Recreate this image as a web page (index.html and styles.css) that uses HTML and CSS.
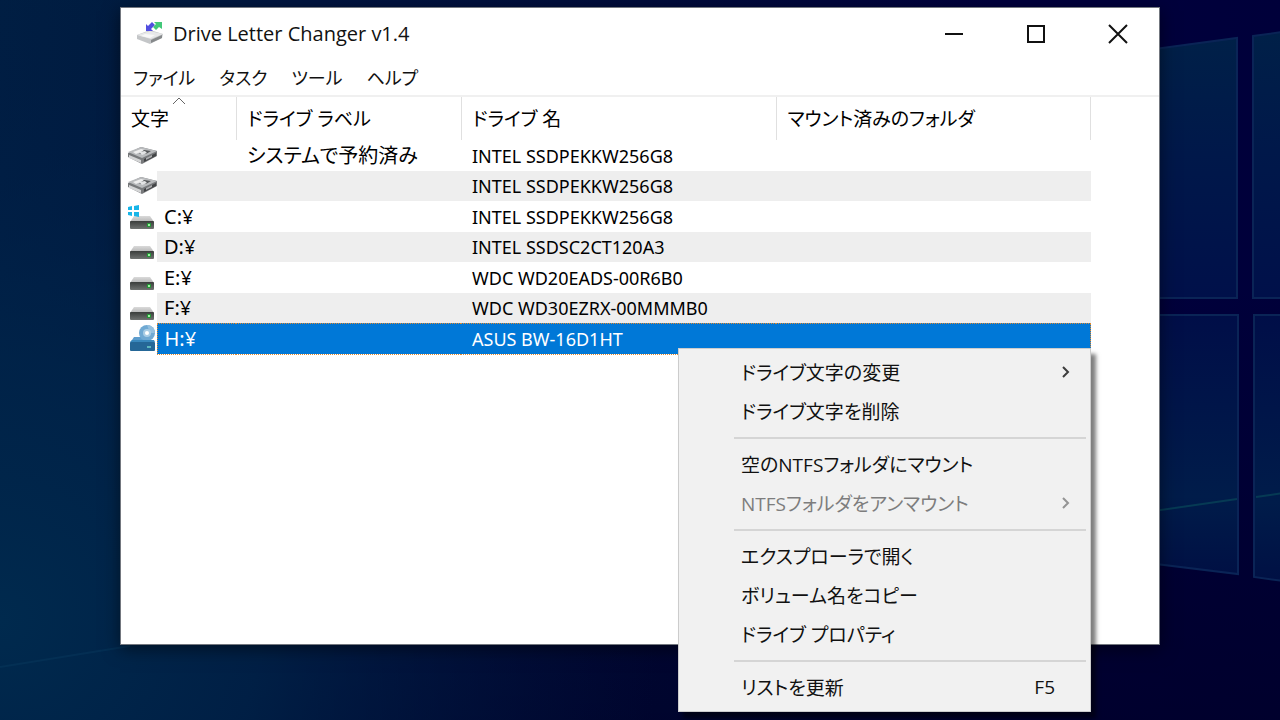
FILE: index.html
```html
<!DOCTYPE html>
<html lang="ja">
<head>
<meta charset="utf-8">
<title>Drive Letter Changer v1.4</title>
<link rel="stylesheet" href="styles.css">
</head>
<body>
<div class="desktop">
  <svg class="wallpaper" viewBox="0 0 1280 720" preserveAspectRatio="none" aria-hidden="true">
    <defs>
      <linearGradient id="sky" x1="0" y1="0" x2="1" y2="0">
        <stop offset="0" stop-color="#001f43"/>
        <stop offset="0.1" stop-color="#001c40"/>
        <stop offset="0.25" stop-color="#001440"/>
        <stop offset="0.5" stop-color="#000c3c"/>
        <stop offset="0.8" stop-color="#00003e"/>
        <stop offset="1" stop-color="#00003a"/>
      </linearGradient>
      <linearGradient id="floor" x1="0" y1="0" x2="0" y2="1">
        <stop offset="0.4" stop-color="#000024" stop-opacity="0"/>
        <stop offset="1" stop-color="#000024" stop-opacity="0.6"/>
      </linearGradient>
      <radialGradient id="glow" gradientUnits="userSpaceOnUse" cx="0" cy="620" r="660">
        <stop offset="0" stop-color="#002a4e"/>
        <stop offset="0.4" stop-color="#00244a" stop-opacity="0.8"/>
        <stop offset="1" stop-color="#001440" stop-opacity="0"/>
      </radialGradient>
      <linearGradient id="paneTop" x1="0" y1="0" x2="0" y2="1">
        <stop offset="0" stop-color="#002048"/>
        <stop offset="0.45" stop-color="#00184a"/>
        <stop offset="1" stop-color="#00104a"/>
      </linearGradient>
      <linearGradient id="paneLow" x1="0" y1="0" x2="0" y2="1">
        <stop offset="0" stop-color="#000e48"/>
        <stop offset="0.7" stop-color="#001c4a"/>
        <stop offset="1" stop-color="#001044"/>
      </linearGradient>
    </defs>
    <rect width="1280" height="720" fill="url(#sky)"/>
    <rect width="1280" height="720" fill="url(#floor)"/>
    <rect width="1280" height="720" fill="url(#glow)"/>
    <path d="M0 667L130 646" stroke="#0a3c60" stroke-width="2" opacity="0.4"/>
    <g stroke="#0a2456" stroke-width="2">
      <path d="M1140 51L1237 38V298H1140Z" fill="url(#paneTop)"/>
      <path d="M1253 36L1290 31V298H1253Z" fill="url(#paneTop)"/>
      <path d="M1140 315H1238V574L1140 562Z" fill="url(#paneLow)"/>
      <path d="M1254 315H1290V582L1254 577Z" fill="url(#paneLow)"/>
      <path d="M1140 513L1237 499M1256 497L1290 492" stroke="#063a54"/>
    </g>
  </svg>

  <main class="window">
    <header class="titlebar">
      <svg class="app-icon" viewBox="0 0 28 26" aria-hidden="true">
        <path d="M1 14L14 9L27 13L26 17L14 23L1 18Z" fill="#c4c6c8"/>
        <path d="M1 14L14 10L27 13L15 18Z" fill="#e7e8e9"/>
        <path d="M15 19L26 14V17L15 22Z" fill="#85888a"/>
        <path d="M9 13L19 14L14 17L5 15Z" fill="#f8f8f8"/>
        <path d="M10 3V10H17L15 8L19 4L16 1L12 5Z" fill="#514ee0"/>
        <path d="M18 1H26V8L23 6L20 9L17 6L20 3Z" fill="#42c879"/>
      </svg>
      <h1 class="title">Drive Letter Changer v1.4</h1>
      <div class="window-controls">
        <button type="button" aria-label="最小化"><svg viewBox="0 0 20 20"><path d="M1 10H19"/></svg></button>
        <button type="button" aria-label="最大化"><svg viewBox="0 0 20 20"><path d="M2 2H18V18H2Z"/></svg></button>
        <button type="button" aria-label="閉じる"><svg viewBox="0 0 20 20"><path d="M1 1L19 19M19 1L1 19"/></svg></button>
      </div>
    </header>
    <nav class="menubar">
      <button type="button">ファイル</button>
      <button type="button">タスク</button>
      <button type="button">ツール</button>
      <button type="button">ヘルプ</button>
    </nav>

    <svg class="symbols" aria-hidden="true">
      <defs>
        <linearGradient id="lid" x1="0" y1="0" x2="0" y2="1">
          <stop offset="0" stop-color="#dadada"/>
          <stop offset="1" stop-color="#b4b4b4"/>
        </linearGradient>
        <linearGradient id="front" x1="0" y1="0" x2="0" y2="1">
          <stop offset="0" stop-color="#3a3d3b"/>
          <stop offset="1" stop-color="#707371"/>
        </linearGradient>
        <symbol id="disk" viewBox="0 0 30 30">
          <path d="M1 12L14 6L30 10V15L15 23L1 16Z" fill="#77797b"/>
          <path d="M1 11L14 6L30 10L15 17Z" fill="#b9bbbd"/>
          <path d="M6 11L14 8L18 9L9 13Z" fill="#eeeeee"/>
          <path d="M17 9L24 10L19 13L12 13Z" fill="#57595b"/>
          <path d="M12 11L18 10L20 12L15 14Z" fill="#e3e4e5"/>
          <path d="M2 14L14 19V22L2 17Z" fill="#d4d5d6"/>
          <path d="M17 18L29 12V15L17 21Z" fill="#434547"/>
          <path d="M19 17L25 14V16L19 19Z" fill="#aaabad"/>
        </symbol>
        <symbol id="drive" viewBox="0 0 30 30">
          <path d="M7 14H23L27 20H3Z" fill="url(#lid)"/>
          <rect x="3" y="19" width="24" height="8" rx="1" fill="url(#front)"/>
          <path d="M20 23H24" stroke="#279538" stroke-width="4"/>
          <path d="M21 23H23" stroke="#9cf2a0" stroke-width="2"/>
        </symbol>
        <symbol id="windows" viewBox="0 0 30 30">
          <path d="M1 5L5 4V8H1ZM7 4L12 3V8H7ZM1 10H5V14L1 13ZM7 10H12V15L7 14Z" fill="#18b5e8"/>
        </symbol>
        <symbol id="optical" viewBox="0 0 30 30">
          <path d="M7 13H20L28 19H3Z" fill="#5d9dcd"/>
          <circle cx="20" cy="9" r="8" fill="#6fa9d3"/>
          <path d="M20 1A8 8 0 0 1 28 9H23Z" fill="#94c0df"/>
          <circle cx="20" cy="9" r="4" fill="#a9cde5"/>
          <circle cx="20" cy="9" r="2" fill="#ffffff"/>
          <rect x="3" y="18" width="25" height="9" rx="1" fill="#256797"/>
          <path d="M3 18H28L27 16H5Z" fill="#3988bd"/>
          <path d="M20 23H24" stroke="#5cb6bd" stroke-width="2"/>
        </symbol>
      </defs>
    </svg>

    <table class="drives">
      <colgroup>
        <col class="col-icon"><col class="col-letter"><col class="col-label"><col class="col-name"><col class="col-folder">
      </colgroup>
      <thead>
        <tr>
          <th class="sorted" colspan="2" aria-sort="ascending">文字<svg class="sort-mark" viewBox="0 0 14 8" aria-hidden="true"><path d="M1 7L7 1L13 7"/></svg></th>
          <th>ドライブ ラベル</th>
          <th>ドライブ 名</th>
          <th>マウント済みのフォルダ</th>
        </tr>
      </thead>
      <tbody>
        <tr><td class="icon"><svg><use href="#disk"/></svg></td><td></td><td class="jp">システムで予約済み</td><td>INTEL SSDPEKKW256G8</td><td></td></tr>
        <tr><td class="icon"><svg><use href="#disk"/></svg></td><td></td><td></td><td>INTEL SSDPEKKW256G8</td><td></td></tr>
        <tr><td class="icon"><svg><use href="#drive"/><use href="#windows"/></svg></td><td>C:¥</td><td></td><td>INTEL SSDPEKKW256G8</td><td></td></tr>
        <tr><td class="icon"><svg><use href="#drive"/></svg></td><td>D:¥</td><td></td><td>INTEL SSDSC2CT120A3</td><td></td></tr>
        <tr><td class="icon"><svg><use href="#drive"/></svg></td><td>E:¥</td><td></td><td>WDC WD20EADS-00R6B0</td><td></td></tr>
        <tr><td class="icon"><svg><use href="#drive"/></svg></td><td>F:¥</td><td></td><td>WDC WD30EZRX-00MMMB0</td><td></td></tr>
        <tr class="selected" aria-selected="true"><td class="icon"><svg><use href="#optical"/></svg></td><td>H:¥</td><td></td><td>ASUS BW-16D1HT</td><td></td></tr>
      </tbody>
    </table>
  </main>

  <div class="context-menu" role="menu">
    <button type="button" role="menuitem">ドライブ文字の変更<svg class="chevron" viewBox="0 0 10 14" aria-hidden="true"><path d="M2 2L7 7L2 12"/></svg></button>
    <button type="button" role="menuitem">ドライブ文字を削除</button>
    <hr>
    <button type="button" role="menuitem">空のNTFSフォルダにマウント</button>
    <button type="button" role="menuitem" disabled>NTFSフォルダをアンマウント<svg class="chevron" viewBox="0 0 10 14" aria-hidden="true"><path d="M2 2L7 7L2 12"/></svg></button>
    <hr>
    <button type="button" role="menuitem">エクスプローラで開く</button>
    <button type="button" role="menuitem">ボリューム名をコピー</button>
    <button type="button" role="menuitem">ドライブ プロパティ</button>
    <hr>
    <button type="button" role="menuitem">リストを更新<span class="shortcut">F5</span></button>
  </div>
</div>
</body>
</html>
```
FILE: styles.css
```css
* {
  box-sizing: border-box;
}

body {
  margin: 0;
  font-family: "Open Sans", "Noto Sans CJK JP", sans-serif;
  font-size: 19px;
  color: #111;
}

button {
  padding: 0;
  border: 0;
  background: none;
  color: inherit;
  font: inherit;
  font-feature-settings: "palt";
  text-align: left;
}

.desktop {
  position: relative;
  height: 100vh;
  overflow: hidden;
  background: #00003c;
}

.wallpaper {
  display: block;
  width: 100%;
  height: 100%;
}

.window {
  position: absolute;
  top: 7px;
  right: 120px;
  bottom: 75px;
  left: 120px;
  border: 1px solid #73777f;
  background: #fff;
  box-shadow: 0 4px 16px rgba(0, 0, 0, 0.5);
}

.titlebar {
  display: flex;
  align-items: center;
  height: 51px;
  padding-left: 15px;
}

.app-icon {
  width: 28px;
  height: 26px;
  margin-right: 9px;
}

.title {
  flex: 1;
  margin: 0;
  font-size: 20px;
  font-weight: 400;
}

.window-controls {
  display: flex;
}

.window-controls button {
  display: grid;
  place-items: center;
  width: 82px;
  height: 50px;
}

.window-controls svg {
  width: 20px;
  height: 20px;
  fill: none;
  stroke: #111;
  stroke-width: 2;
}

.menubar {
  display: flex;
  gap: 24px;
  height: 38px;
  padding: 2px 12px 0;
  border-bottom: 2px solid #f0f0f0;
  font-size: 18px;
  line-height: 34px;
}

.symbols {
  position: absolute;
  width: 0;
  height: 0;
}

.drives {
  width: calc(100% - 68px);
  table-layout: fixed;
  border-collapse: collapse;
  font-family: "Noto Sans", "Noto Sans CJK JP", sans-serif;
  font-size: 18px;
  line-height: 24px;
  color: #000;
}

.col-icon {
  width: 36px;
}

.col-letter {
  width: 79px;
}

.col-label {
  width: 225px;
}

.col-name {
  width: 315px;
}

.drives th {
  height: 43px;
  padding: 0 11px;
  border-right: 1px solid #e0e0e0;
  font-size: 19px;
  font-weight: 400;
  font-feature-settings: "palt";
  text-align: left;
  white-space: nowrap;
}

.drives .sorted {
  position: relative;
  padding-left: 10px;
}

.sort-mark {
  position: absolute;
  top: 0;
  left: 51px;
  width: 14px;
  height: 8px;
  fill: none;
  stroke: #666;
}

.drives td {
  height: 30px;
  padding: 0 11px;
  white-space: nowrap;
}

.drives tr:nth-child(odd) td {
  height: 31px;
}

.drives td:nth-child(2) {
  padding: 0 7px;
  font-size: 20px;
}

.drives tbody tr:nth-child(even) td {
  background: #eee;
}

.drives .jp {
  font-size: 20px;
  font-feature-settings: "palt";
}

.drives tbody tr td.icon {
  padding: 0 0 0 6px;
  background: none;
}

.icon svg {
  display: block;
  width: 30px;
  height: 30px;
}

.drives tbody .selected td {
  border-top: 1px dotted #e08a30;
  border-bottom: 1px dotted #e08a30;
  background: #0078d7;
  color: #fff;
}

.drives tbody .selected td:nth-child(2) {
  border-left: 1px dotted #e08a30;
}

.drives tbody .selected td:last-child {
  border-right: 1px dotted #e08a30;
}

.drives tbody .selected td.icon {
  border: 0;
}

.context-menu {
  position: absolute;
  top: 348px;
  left: 678px;
  display: flex;
  flex-direction: column;
  width: 413px;
  padding: 4px 3px;
  border: 1px solid #ccc;
  background: #f1f1f1;
  box-shadow: 5px 6px 4px rgba(0, 0, 0, 0.5);
}

.context-menu button {
  display: flex;
  align-items: center;
  justify-content: space-between;
  height: 39px;
  padding: 0 16px 2px 59px;
}

.context-menu button:disabled {
  color: #7d7d7d;
}

.context-menu hr {
  width: calc(100% - 53px);
  margin: 6px 1px 6px 52px;
  border: 0;
  border-top: 2px solid #d5d5d5;
}

.chevron {
  width: 10px;
  height: 14px;
  fill: none;
  stroke: currentColor;
  stroke-width: 2;
  opacity: 0.8;
}

.shortcut {
  margin-right: 16px;
}
```
